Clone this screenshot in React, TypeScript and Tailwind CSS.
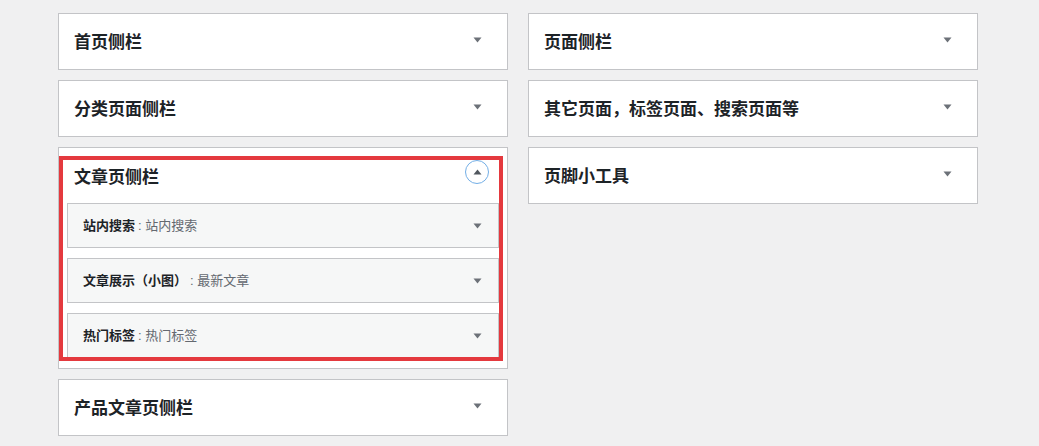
import React from 'react';

type Widget = {
  name: string;
  title: string;
};

type Sidebar = {
  name: string;
  open?: boolean;
  widgets?: Widget[];
};

const LEFT: Sidebar[] = [
  { name: '首页侧栏' },
  { name: '分类页面侧栏' },
  {
    name: '文章页侧栏',
    open: true,
    widgets: [
      { name: '站内搜索', title: '站内搜索' },
      { name: '文章展示（小图）', title: '最新文章' },
      { name: '热门标签', title: '热门标签' },
    ],
  },
  { name: '产品文章页侧栏' },
];

const RIGHT: Sidebar[] = [
  { name: '页面侧栏' },
  { name: '其它页面，标签页面、搜索页面等' },
  { name: '页脚小工具' },
];

const font = 'font-["Segoe_UI","Liberation_Sans","Noto_Sans_CJK_SC",sans-serif]';

function Arrow({ up = false }: { up?: boolean }) {
  return (
    <svg width="9" height="6" viewBox="0 0 9 6" className="block">
      {up ? (
        <path d="M0.5 5.5 L4.5 0.5 L8.5 5.5 Z" fill="#50575e" />
      ) : (
        <path d="M0.5 0.5 L8.5 0.5 L4.5 5.5 Z" fill="#6c7178" />
      )}
    </svg>
  );
}

function WidgetRow({ widget }: { widget: Widget }) {
  return (
    <div className="flex h-[45px] items-center justify-between border border-[#c3c4c7] bg-[#f6f7f7] pl-[15px] pr-[9px]">
      <h3 className="pt-px text-[13px] leading-[18px] font-semibold text-[#1d2327]">
        {widget.name}
        <span className="ml-[3px] font-normal text-[#646970]">: {widget.title}</span>
      </h3>
      <div className="flex h-[24px] w-[24px] items-center justify-center">
        <Arrow />
      </div>
    </div>
  );
}

function SidebarBox({ sidebar }: { sidebar: Sidebar }) {
  return (
    <div className="relative border border-[#c3c4c7] bg-white">
      <div className="flex h-[55px] items-center justify-between pl-[15px] pr-[18px]">
        <h2 className={`text-[17px] leading-[24px] font-semibold text-[#1d2327] ${sidebar.open ? 'pt-[4px]' : 'pt-[2px]'}`}>
          {sidebar.name}
        </h2>
        {sidebar.open ? (
          <div className="mb-[7px] flex h-[24px] w-[24px] items-center justify-center rounded-full border border-[#72aee6]">
            <Arrow up />
          </div>
        ) : (
          <div className="mb-[4px] flex h-[24px] w-[24px] items-center justify-center">
            <Arrow />
          </div>
        )}
      </div>
      {sidebar.open && sidebar.widgets && (
        <div className="flex flex-col gap-[10px] px-[8px] pb-[10px]">
          {sidebar.widgets.map((w) => (
            <WidgetRow key={w.name} widget={w} />
          ))}
        </div>
      )}
      {sidebar.open && (
        // red annotation frame drawn over the open sidebar
        <div className="pointer-events-none absolute left-0 top-[8px] h-[205px] w-[444px] border-[4px] border-[#e4393e]" />
      )}
    </div>
  );
}

export default function App() {
  return (
    <div className={`${font} h-[446px] w-[1039px] overflow-hidden bg-[#f0f0f1] pl-[58px] pt-[13px]`}>
      <div className="flex items-start gap-[20px]">
        <div className="flex w-[450px] flex-col gap-[10px]">
          {LEFT.map((s) => (
            <SidebarBox key={s.name} sidebar={s} />
          ))}
        </div>
        <div className="flex w-[450px] flex-col gap-[10px]">
          {RIGHT.map((s) => (
            <SidebarBox key={s.name} sidebar={s} />
          ))}
        </div>
      </div>
    </div>
  );
}
